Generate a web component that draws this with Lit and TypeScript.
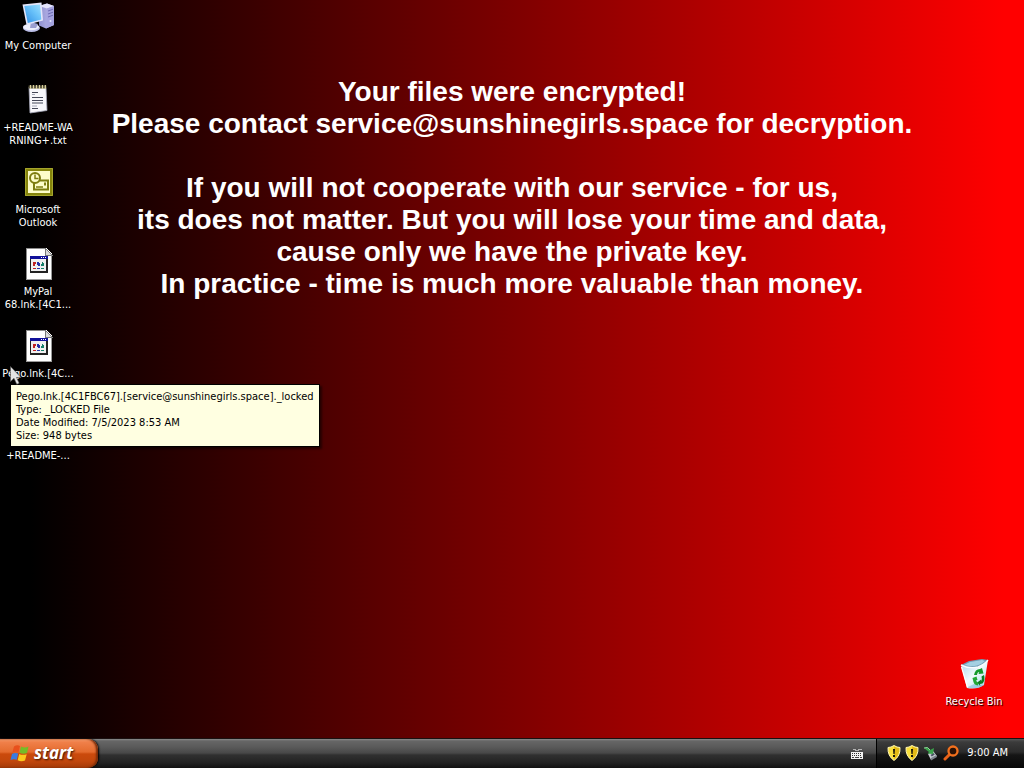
import { LitElement, html, css } from "lit";
import { customElement } from "lit/decorators.js";

const computerIcon = html`<svg viewBox="0 0 32 32" width="32" height="32" aria-hidden="true">
  <defs>
    <linearGradient id="scr" x1="0" y1="1" x2="1" y2="0"><stop offset="0" stop-color="#2f8fe6"/><stop offset=".6" stop-color="#6cc4fa"/><stop offset="1" stop-color="#9fe0ff"/></linearGradient>
    <linearGradient id="twr" x1="0" y1="0" x2="1" y2="0"><stop offset="0" stop-color="#8f8fd0"/><stop offset="1" stop-color="#c4c2ee"/></linearGradient>
  </defs>
  <path d="M17 4 25 1.500 32 4v19l-8 3.500-7-3z" fill="url(#twr)"/>
  <path d="M17 4 25 1.500 32 4l-7 2.500z" fill="#e4e4fb"/>
  <path d="M25 6.500 32 4v19l-8 3.500z" fill="#a5a3df"/>
  <path d="m26 9 5-1.800M26 12l5-1.800M26 15l5-1.800" stroke="#6d6bb4" stroke-width="1"/>
  <circle cx="28.500" cy="19" r="1" fill="#e8e8ff"/>
  <ellipse cx="9.500" cy="26" rx="8.500" ry="4" fill="#b9bce6"/>
  <ellipse cx="9" cy="25" rx="8" ry="3.300" fill="#eceefb"/>
  <path d="m9 20 7 2-2 4H8z" fill="#9a9ed0"/>
  <path d="M.500 2.500 19.500.500l1.500 18L4.500 23z" fill="#e3e6fa"/>
  <path d="m2.300 4 15.700-1.600 1.300 15-13.500 3.700z" fill="url(#scr)"/>
</svg>`;

const notepadIcon = html`<svg viewBox="0 0 32 32" width="32" height="32" aria-hidden="true">
  <path d="m7 3 17 .500 1 23L8 29z" fill="#f7f7fb" stroke="#a4a6b8" stroke-width=".8"/>
  <path d="M6.500 1.500h18v3h-18z" fill="#49442f"/>
  <path d="M8.500 1v4M11.500 1v4M14.500 1v4M17.500 1v4M20.500 1v4M23.300 1v4" stroke="#d8cf9b" stroke-width="1.300"/>
  <path d="M10 8.500h6M10 13.500h11M10 16.500h11M10 19h11M10 24.500h6" stroke="#454858" stroke-width="1"/>
  <path d="M10 10.500h3M10 22h5" stroke="#a2a5b5" stroke-width="1"/>
</svg>`;

const outlookIcon = html`<svg viewBox="0 0 32 32" width="32" height="32" aria-hidden="true">
  <path d="M3 2h28v28H3z" fill="#85840c"/>
  <path d="M6 5h22v22H6z" fill="#fdfcc9"/>
  <path d="M3.500 2.500h27v27h-27z" fill="none" stroke="#a5a52c"/>
  <path d="M12 14.500h14v9H12z" fill="#fdfcc9" stroke="#7d7c10" stroke-width="2"/>
  <path d="M14 21h7" stroke="#7d7c10" stroke-width="1.500"/>
  <path d="M22 16.500h2v3h-2z" fill="#7d7c10"/>
  <circle cx="13" cy="12" r="5" fill="#fdfcc9" stroke="#7d7c10" stroke-width="2"/>
  <path d="M13 8.500v4h3.500" fill="none" stroke="#7d7c10" stroke-width="1.500"/>
</svg>`;

const fileIcon = html`<svg viewBox="0 0 32 32" width="32" height="32" shape-rendering="crispEdges" aria-hidden="true">
  <path d="M4 0h20l6 6v26H4z" fill="#fff"/>
  <path d="M4.500 31.500V.500H23" fill="none" stroke="#8b8b8b"/>
  <path d="M4 31.500h25.500V7" fill="none" stroke="#9a9a9a"/>
  <path d="M23 0v7h7z" fill="#d9d9d9" stroke="#777"/>
  <path d="M8 8h18v17H8z" fill="#222"/>
  <path d="M9 11h15v12H9z" fill="#f0f0f0"/>
  <path d="M8 8h18v3H8z" fill="#11119a"/>
  <path d="M19 9.500h1M21 9.500h1M23 9.500h1" stroke="#fff"/>
  <path d="M11 14h3v2h-1v2h-2zM11 20h3v1h-3z" fill="#c02222"/>
  <path d="M15 14h2v1h1v3h-2v-1h-1zM15 20h3v1h-3z" fill="#2430a8"/>
  <path d="M20 14h1v1h1v3h-3v-2h1zM19 20h3v1h-3z" fill="#16816a"/>
</svg>`;

const recycleIcon = html`<svg viewBox="0 0 32 32" width="32" height="32" aria-hidden="true">
  <defs>
    <linearGradient id="bin" x1="0" y1="0" x2="1" y2="1"><stop offset="0" stop-color="#a9d3e8"/><stop offset=".5" stop-color="#f1fafd"/><stop offset="1" stop-color="#a0d4ea"/></linearGradient>
  </defs>
  <path d="M3 7q8 4 17 2 6-2 10-7l-4 25q-7 5-17 3z" fill="url(#bin)"/>
  <path d="M3 7 11 3l13-2 6 1q-4 5-10 7-9 2-17-2z" fill="#6f9cb4"/>
  <path d="M6 7 12 4l12-2 3 1q-3 3-8 4.500Q13 9 6 7z" fill="#a4d0e2"/>
  <path d="M3 7q8 4 17 2 6-2 10-7" fill="none" stroke="#f8fdff" stroke-width="1.400"/>
  <path d="m3.500 9 6 20.500" fill="none" stroke="#fff" stroke-width="1.200"/>
  <path d="m9 29.500 8-4 9 1.500q-7 5-17 2.500z" fill="#6fb4d4" opacity=".5"/>
  <path d="M16 17q1-6 6-6l2-1 1.500 5.500-5 .500.800-2q-2 0-2.300 3z" fill="#159a2c"/>
  <path d="M26 17q1.500 5-1.500 8.500L22 26l.200 2-3-3.500 4-3 .100 2q1.200-2 .200-5z" fill="#0c7f22"/>
  <path d="m14.500 20 4-1.500 1 3.500h-1.300q.300 2 1.800 2.500v3q-4.500-.500-5-5.500z" fill="#23a836"/>
</svg>`;

const flagIcon = html`<svg viewBox="0 0 20 18" width="20" height="18" aria-hidden="true">
  <path d="M4 2.500Q7 .500 10 2L8.500 8.300Q5 7 2.300 8.800z" fill="#e8501c"/>
  <path d="M11 2.500q3.500 1.800 7.500 0L17 9q-4 1.500-7.500-.300z" fill="#74bd27"/>
  <path d="M2 10Q5 8.300 8.200 9.500L6.800 15.800Q3.500 14.500.500 16z" fill="#3a7be0"/>
  <path d="M9.200 10q3.500 1.600 7.500.200L15 16.500q-4 1.500-7.300-.200z" fill="#fbc91d"/>
</svg>`;

const keyboardIcon = html`<svg viewBox="0 0 14 14" width="14" height="14" shape-rendering="crispEdges" aria-hidden="true">
  <path d="M3 2h2v1h3v-1h3v1" fill="none" stroke="#b5b5b5"/>
  <path d="M1 5h12v7H1z" fill="#f4f4f4"/>
  <path d="M2 6.500h10M2 8.500h10" stroke="#333" stroke-dasharray="1 1"/>
  <path d="M2 10.500h2M5 10.500h4M10 10.500h2" stroke="#444"/>
</svg>`;

const shieldIcon = () => html`<svg viewBox="0 0 14 16" width="14" height="16" aria-hidden="true">
  <path d="M7 .500Q10 2.500 13 2.500 13.500 11 7 15.500.500 11 1 2.500 4 2.500 7 .500z" fill="#f9df3c" stroke="#fff5b0"/>
  <path d="M7 1.500Q10 3.300 12.300 3.300 12.500 11 7 14.600z" fill="#e3b915"/>
  <path d="M6 4h2l-.400 5H6.400zM6 10h2v2H6z" fill="#17150a"/>
</svg>`;

const removeHardwareIcon = html`<svg viewBox="0 0 16 16" width="16" height="16" aria-hidden="true">
  <path d="m5 9 5-3 4 5-6 4z" fill="#c9ccd2"/>
  <path d="m8 13 5.500-3 .500 2-6 3.500z" fill="#7d838c"/>
  <path d="m7.500 10 3-2 1.300 1.600-3 2z" fill="#4a5563"/>
  <path d="m1 3 3.500-.500L7 5l4-2-1 6-5.500-.500L6 7 4 5.500z" fill="#3aa14a"/>
  <path d="m1 3 3.500-.500L7 5" fill="none" stroke="#8fd69a"/>
</svg>`;

const searchIcon = html`<svg viewBox="0 0 16 16" width="16" height="16" aria-hidden="true">
  <path d="m2 14 4.500-4.500" stroke="#e8621a" stroke-width="3" stroke-linecap="round"/>
  <circle cx="10" cy="6" r="4.500" fill="#2b1206" stroke="#f2701d" stroke-width="2.300"/>
</svg>`;

const shortcuts = [
  { icon: computerIcon, lines: ["My Computer"] },
  { icon: notepadIcon, lines: ["+README-WA", "RNING+.txt"] },
  { icon: outlookIcon, lines: ["Microsoft", "Outlook"] },
  { icon: fileIcon, lines: ["MyPal", "68.lnk.[4C1..."] },
  { icon: fileIcon, lines: ["Pego.lnk.[4C..."] },
  { icon: notepadIcon, lines: ["+README-..."] },
];

@customElement("desktop-icon")
class DesktopIcon extends LitElement {
  static properties = { icon: { attribute: false }, lines: { attribute: false } };
  declare icon: unknown;
  declare lines: string[];
  static styles = css`
    :host { display: block; }
    .item {
      display: flex; flex-direction: column; align-items: center; gap: 5px;
      width: 100%; margin: 0; padding: 0; border: 0; background: none;
      color: #fff; font: inherit; text-shadow: 1px 1px 1px #000;
    }
    .item svg { display: block; }
    .label span { display: block; white-space: nowrap; }
  `;
  render() {
    return html`<button class="item" type="button">
      ${this.icon}
      <span class="label">${this.lines.map((l) => html`<span>${l}</span>`)}</span>
    </button>`;
  }
}

@customElement("app-root")
class AppRoot extends LitElement {
  static styles = css`
    :host {
      display: grid; grid-template-rows: 1fr 30px; min-height: 100vh;
      font: 11px/13px Tahoma, "DejaVu Sans Condensed", "Noto Sans", sans-serif;
      color: #fff; cursor: default;
    }
    .desktop {
      position: relative; display: grid; grid-template-columns: 1fr;
      background: linear-gradient(90deg, #000 3%, #800000 51%, #f00 98%);
    }
    .desktop > * { grid-area: 1 / 1; }
    .message {
      margin: 0; padding-top: 76px; text-align: center; white-space: pre-line;
      font: bold 28px/32px "Liberation Sans", Arial, sans-serif;
    }
    .icons {
      justify-self: start; width: 76px; padding-top: 2px;
      display: grid; grid-auto-rows: 82px; align-content: start;
    }
    .bin { place-self: end; width: 76px; margin: 0 12px 30px 0; }
    .tooltip {
      position: absolute; left: 10px; top: 384px; padding: 5px 5px 4px; border: 1px solid #000;
      background: #ffffe1; color: #000; box-shadow: 2px 2px 2px rgba(0, 0, 0, .5);
      white-space: nowrap;
    }
    .pointer { position: absolute; left: 10px; top: 366px; }
    .taskbar {
      display: flex; align-items: stretch;
      border-top: 1px solid #1a1010; box-sizing: border-box;
      background: linear-gradient(#8a8a8a 0, #666 2px, #5a5a5a 8px, #484848 14px, #303030 16px, #222 24px, #111 100%);
    }
    .start {
      display: flex; align-items: center; gap: 4px; width: 98px; padding: 0 0 2px 10px;
      border: 0; border-radius: 0 10px 10px 0; color: #fff;
      background: linear-gradient(#f7a070 0, #f0804a 3px, #e46b2e 13px, #cb4a0c 15px, #c2470c 22px, #a33a08 100%);
      box-shadow: inset -2px 0 2px #7a2c08, 1px 0 2px #000;
      font: italic bold 17px/20px "Open Sans", "Liberation Sans", sans-serif;
      text-shadow: 1px 1px 2px #3a1200;
    }
    .language { margin-left: auto; display: flex; align-items: center; padding-right: 12px; }
    .tray {
      display: flex; align-items: center; gap: 4px; padding: 0 16px 2px 10px;
      border-left: 1px solid #000;
      background: linear-gradient(#555 0, #3b3b3b 3px, #2b2b2b 13px, #151515 16px, #070707 100%);
    }
    .tray svg, .language svg, .start svg { display: block; }
    .clock { padding-left: 4px; }
  `;
  render() {
    return html`
      <main class="desktop">
        <p class="message">Your files were encrypted!
Please contact service@sunshinegirls.space for decryption.

If you will not cooperate with our service - for us,
its does not matter. But you will lose your time and data,
cause only we have the private key.
In practice - time is much more valuable than money.</p>
        <nav class="icons" aria-label="Desktop">
          ${shortcuts.map((s) => html`<desktop-icon .icon=${s.icon} .lines=${s.lines}></desktop-icon>`)}
        </nav>
        <desktop-icon class="bin" .icon=${recycleIcon} .lines=${["Recycle Bin"]}></desktop-icon>
        <div class="tooltip" role="tooltip">
          <div>Pego.lnk.[4C1FBC67].[service@sunshinegirls.space]._locked</div>
          <div>Type: _LOCKED File</div>
          <div>Date Modified: 7/5/2023 8:53 AM</div>
          <div>Size: 948 bytes</div>
        </div>
        <svg class="pointer" viewBox="0 0 12 19" width="12" height="19" aria-hidden="true">
          <path d="M.500.500v15l3.500-3.200 2.800 6 2.400-1.100-2.700-5.700H11z" fill="#e4e4e4" stroke="#555" stroke-width=".6"/>
        </svg>
      </main>
      <footer class="taskbar">
        <button class="start" type="button">${flagIcon}<span>start</span></button>
        <div class="language">${keyboardIcon}</div>
        <div class="tray">
          ${shieldIcon()}${shieldIcon()}${removeHardwareIcon}${searchIcon}
          <time class="clock">9:00 AM</time>
        </div>
      </footer>
    `;
  }
}
